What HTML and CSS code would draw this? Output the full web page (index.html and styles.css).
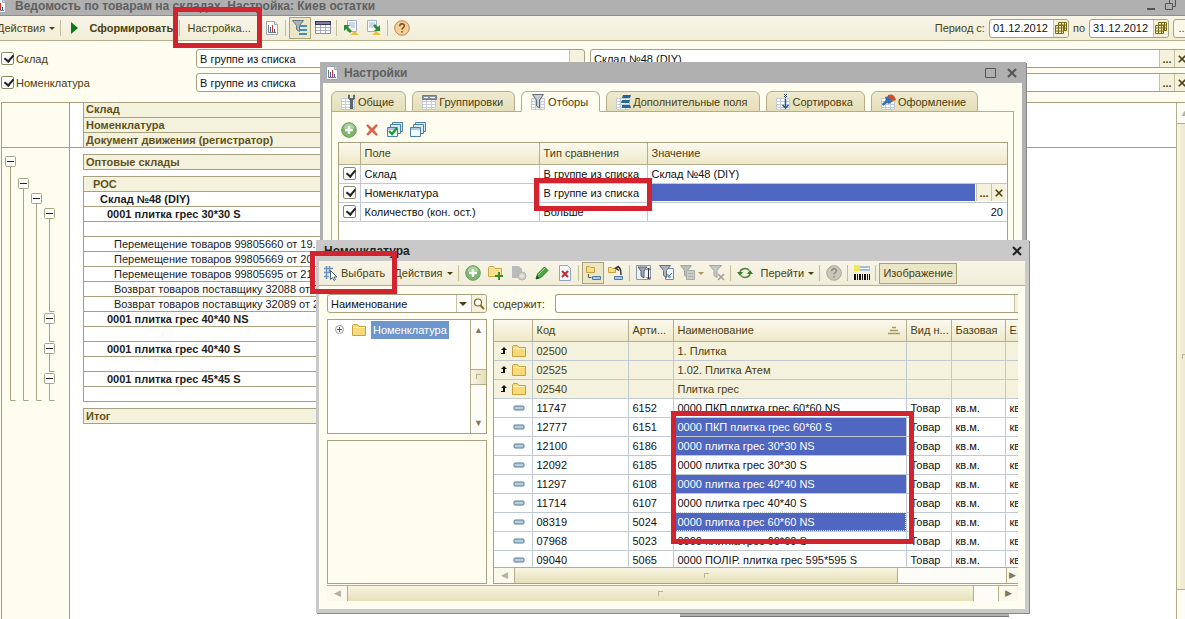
FILE: index.html
```html
<!DOCTYPE html>
<html lang="ru">
<head>
    <meta charset="UTF-8">
    <title>Ведомость по товарам на складах</title>
    <link rel="stylesheet" href="styles.css">
</head>
<body>
    <!-- icons -->
    <svg class="defs" width="0" height="0">
        <symbol id="i-report" viewBox="0 0 16 16">
            <path d="M2.500 1.500h8l3 3v10h-11z" fill="#fff" stroke="#9aa7b8"/>
            <path d="M10.500 1.500v3h3" fill="#dde4ee" stroke="#9aa7b8"/>
            <path d="M4.500 5v7.500h7.500" fill="none" stroke="#777"/>
            <path d="M6 7h1v5h-1zM10 9h1v3h-1z" fill="#3b57a8"/>
            <path d="M8 5h1v7h-1z" fill="#c33"/>
        </symbol>
        <symbol id="i-filter" viewBox="0 0 16 16">
            <path d="M0.500 0.500h11l-4 5v6l-3 -2v-4z" fill="#a9b4bd" stroke="#6b7680"/>
            <path d="M7 5h8v2h-8zM8 9h7v2h-7zM7 13h8v2h-8z" fill="#3f8fb8"/>
        </symbol>
        <symbol id="i-table" viewBox="0 0 16 16">
            <path d="M0.500 1.500h15v12h-15z" fill="#fff" stroke="#8b8da0"/>
            <path d="M0 1h16v4h-16z" fill="#34346a"/>
            <path d="M1 3h14" stroke="#c9c9e0"/>
            <path d="M1 7.500h14M1 10.500h14M5.500 5v8M10.500 5v8" stroke="#aaacc0"/>
        </symbol>
        <symbol id="i-load" viewBox="0 0 16 16">
            <path d="M4.500 0.500h9v11h-9z" fill="#fff" stroke="#9db0c8"/>
            <path d="M6 3h6M6 5h6M8 7h4" stroke="#9db0c8"/>
            <path d="M1 5v6l2 -2l4 4l2 -2l-4 -4l2 -2z" fill="#2c8a3c"/>
            <path d="M7 15l4.500 -4l4.500 4z" fill="#e8c23c"/>
        </symbol>
        <symbol id="i-save" viewBox="0 0 16 16">
            <path d="M1.500 0.500h9v11h-9z" fill="#fff" stroke="#9db0c8"/>
            <path d="M3 3h6M3 5h6M3 7h4" stroke="#9db0c8"/>
            <path d="M14 11v-6l-2 2l-3 -3l-2 2l3 3l-2 2z" fill="#2c8a3c"/>
            <path d="M6 15l4.500 -4l4.500 4z" fill="#e8c23c"/>
        </symbol>
        <symbol id="i-help" viewBox="0 0 16 16">
            <circle cx="8" cy="8" r="7.300" fill="#f7cf96" stroke="#b58a5a"/>
            <path d="M5.700 6.300q0 -2.500 2.300 -2.500t2.300 2.100q0 1.100 -1.200 1.900q-1.100 0.700 -1.100 1.800M8 11v1.500" fill="none" stroke="#7a4a1c" stroke-width="1.400"/>
        </symbol>
        <symbol id="i-help-off" viewBox="0 0 16 16">
            <circle cx="8" cy="8" r="7.300" fill="#c9c7ba" stroke="#aaa899"/>
            <path d="M5.700 6.300q0 -2.500 2.300 -2.500t2.300 2.100q0 1.100 -1.200 1.900q-1.100 0.700 -1.100 1.800M8 11v1.500" fill="none" stroke="#8f8d80" stroke-width="1.400"/>
        </symbol>
        <symbol id="i-calendar" viewBox="0 0 12 12">
            <path d="M3.500 0.500h8v8h-8z" fill="#f7f0c0" stroke="#7a6a10"/>
            <path d="M0.500 3.500h8v8h-8z" fill="#f7f0c0" stroke="#7a6a10"/>
            <path d="M1 6h10M1 9h8M3.500 1v10M6.500 1v10M9.500 1v8M4 3h7" stroke="#7a6a10"/>
        </symbol>
        <symbol id="i-add" viewBox="0 0 16 16">
            <circle cx="8" cy="8" r="7.300" fill="#7bb66c" stroke="#6a9a62"/>
            <path d="M2.500 6.500a5.500 5 0 0 1 11 0z" fill="#a9d29c"/>
            <path d="M8 4v8M4 8h8" stroke="#fff" stroke-width="2.400"/>
        </symbol>
        <symbol id="i-del" viewBox="0 0 16 16">
            <path d="M2.500 3.500q1 -1.500 2.500 0l3 3l3.500 -3.500q1 -1 2 0.500l-3.800 4.500l3.800 4.500q-1 1.500 -2 0.500l-3.500 -3.500l-3.500 3.500q-1 0.500 -1.800 -0.800l3.600 -4.200z" fill="#e2604c" stroke="#c2503c" stroke-width="0.600"/>
        </symbol>
        <symbol id="i-sheets" viewBox="0 0 16 16">
            <path d="M5.500 0.500h10v9h-10z" fill="#dbe9f5" stroke="#4a7fa8"/>
            <path d="M3.500 2.500h10v9h-10z" fill="#dbe9f5" stroke="#4a7fa8"/>
            <path d="M0.500 5.500h10v9h-10z" fill="#f2f8fd" stroke="#4a7fa8"/>
            <path d="M1 6h9v2h-9z" fill="#a9cbe4"/>
        </symbol>
        <symbol id="i-tick" viewBox="0 0 16 16">
            <path d="M2 9l3 3l5 -6" fill="none" stroke="#1f9a2c" stroke-width="2.400"/>
        </symbol>
        <symbol id="i-grid" viewBox="0 0 16 16">
            <path d="M0.500 4.500h13v11h-13z" fill="#fff" stroke="#c3cbd8"/>
            <path d="M1 7.500h12M1 10.500h12M1 13.500h12M4.500 5v10M9.500 5v10" stroke="#c3cbd8"/>
        </symbol>
        <symbol id="i-wrench" viewBox="0 0 16 16">
            <path d="M7 0.500v4l2 2v8.500h3v-8.500l2 -2v-4l-2 0.500v3h-3v-3z" fill="#5f6870"/>
        </symbol>
        <symbol id="i-head" viewBox="0 0 16 16">
            <path d="M0.500 1.500h14v4h-14z" fill="#8b95a6" stroke="#717c90"/>
            <path d="M2 3h4v1h-4zM8 3h5v1h-5z" fill="#fff"/>
        </symbol>
        <symbol id="i-funnel" viewBox="0 0 16 16">
            <path d="M1.500 0.500h11l-4 5.500v8l-3 -2v-6z" fill="#c5ced4" stroke="#626c74"/>
        </symbol>
        <symbol id="i-bars" viewBox="0 0 16 16">
            <path d="M7 1h8l-1 3h-8zM6 6h8l-1 3h-8zM6 11h8l1 3h-9z" fill="#22669c"/>
        </symbol>
        <symbol id="i-down" viewBox="0 0 16 16">
            <path d="M8 0h1v1h-1zM10 0h1v1h-1zM9 1h1v1h-1zM8 2h1v1h-1zM10 2h1v1h-1zM9 3h1v1h-1z" fill="#345"/>
            <path d="M9.500 5v9M6.500 11l3 3l3 -3" fill="none" stroke="#2a5a98" stroke-width="1.600"/>
        </symbol>
        <symbol id="i-brush" viewBox="0 0 16 16">
            <path d="M1 10l4 -4l-1 -3l4 -1l4 5l-4 3l-2 -1l-4 3z" fill="#3570b4"/>
            <path d="M7 1q6 -2 8 5l-3 1l-5 -4z" fill="#c8502e"/>
        </symbol>
        <symbol id="i-select" viewBox="0 0 16 16">
            <path d="M3.500 1v13M6.500 1v6M1 3.500h9M1 7.500h7M1 11.500h5" stroke="#6c95c2" stroke-width="1.600" fill="none"/>
            <path d="M7.500 5.500v9l2 -2l1.500 3l1.500 -1l-1.500 -2.500h3z" fill="#fff" stroke="#4a6078"/>
        </symbol>
        <symbol id="i-folder" viewBox="0 0 16 16">
            <path d="M1.500 13.500v-10l1 -1h4l1.500 2h6.500v9z" fill="#f6d978" stroke="#c9a040"/>
            <path d="M2 6h12v-1h-12z" fill="#fdf0bb"/>
        </symbol>
        <symbol id="i-folder-add" viewBox="0 0 16 16">
            <path d="M0.500 11.500v-9l1 -1h4l1.500 2h6.500v8z" fill="#f8e291" stroke="#cfa84a"/>
            <path d="M11 7v8M7 11h8" stroke="#3c8c2c" stroke-width="2"/>
        </symbol>
        <symbol id="i-copy-off" viewBox="0 0 16 16">
            <path d="M1 1h7l3 3v9h-10z" fill="#b9bcbb"/>
            <circle cx="11" cy="11" r="4" fill="#cfd0c8" stroke="#b3b4ab"/>
            <path d="M11 9v4M9 11h4" stroke="#f2f2ea"/>
        </symbol>
        <symbol id="i-pencil" viewBox="0 0 16 16">
            <path d="M2 14l1.500 -5l7 -7l3.500 3.500l-7 7z" fill="#4aa83c" stroke="#2f7a26"/>
            <path d="M4 10l7 -7" stroke="#9edc8c"/>
            <path d="M2 14l1 -3l2 2z" fill="#234"/>
        </symbol>
        <symbol id="i-mark-del" viewBox="0 0 16 16">
            <path d="M2.500 0.500h8l3 3v12h-11z" fill="#f5f8fc" stroke="#8fa5c4"/>
            <path d="M5 6l6 6M11 6l-6 6" stroke="#c0282c" stroke-width="2"/>
        </symbol>
        <symbol id="i-hier" viewBox="0 0 16 16">
            <path d="M1.500 7.500v-6h3l1 1h4v5z" fill="#f6df88" stroke="#c9a040"/>
            <path d="M3.500 9v3.500h3" fill="none" stroke="#555"/>
            <path d="M7.500 11.500h8v3h-8z" fill="#a9c8e4" stroke="#4f7aa6"/>
        </symbol>
        <symbol id="i-up-level" viewBox="0 0 16 16">
            <path d="M0.500 7.500v-5h3l1 1h3v4z" fill="#f6df88" stroke="#c9a040"/>
            <path d="M8 3q5 -3 5 7M11 1l-3.500 2l3.500 2.500" fill="none" stroke="#333" stroke-width="1.400"/>
            <path d="M6.500 11.500h8v3h-8z" fill="#a9c8e4" stroke="#4f7aa6"/>
        </symbol>
        <symbol id="i-filter-set" viewBox="0 0 16 16">
            <path d="M0.500 0.500h14v14h-14z" fill="#eef2f6" stroke="#8b99aa"/>
            <path d="M2 2h9l-3 4v7l-3 -2v-5z" fill="#9aa6b2" stroke="#5b6672"/>
            <path d="M12.500 3v11M10.500 5l2 -2l2 2M10.500 12l2 2l2 -2" fill="none" stroke="#333"/>
        </symbol>
        <symbol id="i-filter-cur" viewBox="0 0 16 16">
            <path d="M6.500 3.500h8v11h-8z" fill="#eef3fa" stroke="#6f8db5"/>
            <path d="M0.500 0.500h11l-4 5v7l-3 -2v-5z" fill="#aab5c0" stroke="#66727e"/>
            <path d="M9 12l4 -4M9 12v-3M9 12h3" stroke="#4a74b0" fill="none"/>
        </symbol>
        <symbol id="i-filter-hist" viewBox="0 0 16 16">
            <path d="M0.500 0.500h11l-4 5v7l-3 -2v-5z" fill="#bcbfbc" stroke="#a0a3a0"/>
            <path d="M6.500 5.500h8v9h-8z" fill="#c9cbc6" stroke="#a9aba6"/>
            <path d="M8 8.500h5M8 11.500h5" stroke="#a9aba6"/>
        </symbol>
        <symbol id="i-filter-off" viewBox="0 0 16 16">
            <path d="M0.500 0.500h12l-4.500 5v7l-3 -2v-5z" fill="#c6c8c2" stroke="#a4a6a0"/>
            <path d="M9 9l6 6M15 9l-6 6" stroke="#a4a098" stroke-width="1.600"/>
        </symbol>
        <symbol id="i-refresh" viewBox="0 0 16 16">
            <path d="M3 8q0 -4 5 -4.500q3 0 4 2M13 8q0 4 -5 4.500q-3 0 -4 -2" fill="none" stroke="#4c8a3c" stroke-width="1.600"/>
            <path d="M0 7h6l-3 4zM16 9h-6l3 -4z" fill="#3c7a2c"/>
        </symbol>
        <symbol id="i-barcode" viewBox="0 0 16 16">
            <path d="M5 1h11v5h-11z" fill="#a9bcdc"/>
            <path d="M6 3.500h9" stroke="#fff"/>
            <path d="M0 0h6v6h-6z" fill="#f7e94a"/>
            <path d="M0 9h2v6h-2zM3 9h1v6h-1zM5 9h2v6h-2zM8 9h1v6h-1zM10 9h2v6h-2zM13 9h1v6h-1zM15 9h1v6h-1z" fill="#111"/>
        </symbol>
        <symbol id="i-search" viewBox="0 0 12 12">
            <circle cx="5" cy="4.500" r="3.500" fill="#fff" stroke="#7a6a20" stroke-width="1.200"/>
            <path d="M7.500 7.500l3.500 3.500" stroke="#7a6a20" stroke-width="1.800"/>
        </symbol>
        <symbol id="i-cross" viewBox="0 0 10 10">
            <path d="M1 1l8 8M9 1l-8 8" stroke="currentColor" stroke-width="2"/>
        </symbol>
        <symbol id="i-up" viewBox="0 0 8 10">
            <path d="M4 1l3 3h-2v4h-4v-1h2v-3h-2z" fill="#111"/>
        </symbol>
        <symbol id="i-item" viewBox="0 0 12 6">
            <rect x="1" y="1" width="10" height="4" rx="1" fill="#b4cfe0" stroke="#557a94"/>
        </symbol>
        <symbol id="i-sort" viewBox="0 0 12 10">
            <path d="M4 1.500h4M2 4.500h8M0 7.500h12" stroke="#a39a62" stroke-width="1.400"/>
        </symbol>
    </svg>

    <div class="app">
        <header class="title">
            <svg class="ico"><use href="#i-report"/></svg>
            <h1>Ведомость по товарам на складах. Настройка: Киев остатки</h1>
            <svg class="winctl" width="30" height="14" viewBox="0 0 30 14">
                <path d="M1 10h8" stroke="#555" stroke-width="2"/>
                <path d="M23.500 4v-3.500h6v7h-3M19.500 4.500h7v6h-7z" fill="none" stroke="#555"/>
            </svg>
        </header>

        <div class="toolbar main-tools">
            <button class="drop">Действия</button>
            <i class="sep"></i>
            <button class="run">Сформировать</button>
            <i class="sep wide"></i>
            <button class="setup">Настройка...<span class="mark"></span></button>
            <button class="tool"><svg class="ico"><use href="#i-report"/></svg></button>
            <i class="sep"></i>
            <button class="tool on"><svg class="ico"><use href="#i-filter"/></svg></button>
            <button class="tool"><svg class="ico"><use href="#i-table"/></svg></button>
            <i class="sep"></i>
            <button class="tool"><svg class="ico"><use href="#i-load"/></svg></button>
            <button class="tool"><svg class="ico"><use href="#i-save"/></svg></button>
            <i class="sep"></i>
            <button class="tool"><svg class="ico"><use href="#i-help"/></svg></button>
            <div class="period">
                <label for="from">Период с:</label>
                <span class="field date"><input id="from" type="text" value="01.12.2012"><button><svg class="small"><use href="#i-calendar"/></svg></button></span>
                <label for="to">по</label>
                <span class="field date"><input id="to" type="text" value="31.12.2012"><button><svg class="small"><use href="#i-calendar"/></svg></button></span>
                <button class="more">...</button>
            </div>
        </div>

        <div class="filters">
            <div class="filter">
                <label><input type="checkbox" checked>Склад</label>
                <span class="field kind"><select aria-label="Тип сравнения"><option>В группе из списка</option></select></span>
                <span class="field value"><input type="text" value="Склад №48 (DIY)" aria-label="Склад"><button>...</button><button><svg class="x"><use href="#i-cross"/></svg></button></span>
            </div>
            <div class="filter">
                <label><input type="checkbox" checked>Номенклатура</label>
                <span class="field kind"><select aria-label="Тип сравнения"><option>В группе из списка</option></select></span>
                <span class="field value"><input type="text" aria-label="Номенклатура"><button>...</button><button><svg class="x"><use href="#i-cross"/></svg></button></span>
            </div>
        </div>

        <div class="report">
            <div class="gutter">
                <svg width="68" height="300" viewBox="0 0 68 300">
                    <g fill="none" stroke="#a9a283">
                        <path d="M8.500 20v233.500h5M21.500 42v211.500h5M34.500 57v196.500h5M47.500 72v92.500h5M47.500 177v17.500h5M47.500 207v17.500h5M47.500 237v16.500h5"/>
                        <g fill="#fff">
                            <rect x="3.500" y="9.500" width="10" height="10" rx="1"/>
                            <rect x="16.500" y="31.500" width="10" height="10" rx="1"/>
                            <rect x="29.500" y="46.500" width="10" height="10" rx="1"/>
                            <rect x="42.500" y="61.500" width="10" height="10" rx="1"/>
                            <rect x="42.500" y="166.500" width="10" height="10" rx="1"/>
                            <rect x="42.500" y="196.500" width="10" height="10" rx="1"/>
                            <rect x="42.500" y="226.500" width="10" height="10" rx="1"/>
                        </g>
                    </g>
                    <path d="M5 14.500h7M18 36.500h7M31 51.500h7M44 66.500h7M44 171.500h7M44 201.500h7M44 231.500h7" stroke="#222"/>
                </svg>
            </div>
            <div class="sheet">
                <table class="cells head">
                    <tr><th>Склад</th></tr>
                    <tr><th>Номенклатура</th></tr>
                    <tr><th>Документ движения (регистратор)</th></tr>
                </table>
                <table class="cells">
                    <tr><th>Оптовые склады</th></tr>
                </table>
                <table class="cells">
                    <tr><th class="l1">РОС</th></tr>
                    <tr><td class="l2 b">Склад №48 (DIY)</td></tr>
                    <tr><td class="l3 b">0001 плитка грес 30*30 S</td></tr>
                    <tr><td></td></tr>
                    <tr><td class="l4">Перемещение товаров 99805660 от 19.12.2012</td></tr>
                    <tr><td class="l4">Перемещение товаров 99805669 от 20.12.2012</td></tr>
                    <tr><td class="l4">Перемещение товаров 99805695 от 21.12.2012</td></tr>
                    <tr><td class="l4">Возврат товаров поставщику 32088 от 21.12.2012</td></tr>
                    <tr><td class="l4">Возврат товаров поставщику 32089 от 21.12.2012</td></tr>
                    <tr><td class="l3 b">0001 плитка грес 40*40 NS</td></tr>
                    <tr><td></td></tr>
                    <tr><td class="l3 b">0001 плитка грес 40*40 S</td></tr>
                    <tr><td></td></tr>
                    <tr><td class="l3 b">0001 плитка грес 45*45 S</td></tr>
                    <tr><td></td></tr>
                </table>
                <table class="cells">
                    <tr><th>Итог</th></tr>
                </table>
            </div>
            <div class="vscroll"><button>▲</button><i class="thumb"></i><i class="rest"></i></div>
        </div>
    </div>

    <i class="ledge"></i>

    <!-- report settings -->
    <section class="win settings">
        <header class="title">
            <svg class="ico"><use href="#i-report"/></svg>
            <h2>Настройки</h2>
            <svg class="winctl" width="34" height="12" viewBox="0 0 34 12">
                <path d="M1.500 1.500h10v9h-10z" fill="none" stroke="#555"/>
                <path d="M24 2l8 8M32 2l-8 8" stroke="#555" stroke-width="2"/>
            </svg>
        </header>
        <nav class="tabs">
            <button><svg class="ico"><use href="#i-grid"/><use href="#i-wrench"/></svg>Общие</button>
            <button><svg class="ico"><use href="#i-grid"/><use href="#i-head"/></svg>Группировки</button>
            <button class="current"><svg class="ico"><use href="#i-grid"/><use href="#i-funnel"/></svg>Отборы</button>
            <button><svg class="ico"><use href="#i-grid"/><use href="#i-bars"/></svg>Дополнительные поля</button>
            <button><svg class="ico"><use href="#i-grid"/><use href="#i-down"/></svg>Сортировка</button>
            <button><svg class="ico"><use href="#i-grid"/><use href="#i-brush"/></svg>Оформление</button>
        </nav>
        <div class="page">
            <div class="page-tools">
                <button class="tool"><svg class="ico"><use href="#i-add"/></svg></button>
                <button class="tool"><svg class="ico"><use href="#i-del"/></svg></button>
                <button class="tool"><svg class="ico"><use href="#i-sheets"/><use href="#i-tick"/></svg></button>
                <button class="tool"><svg class="ico"><use href="#i-sheets"/></svg></button>
            </div>
            <div class="grid-box">
                <table class="grid">
                    <colgroup><col class="c-check"><col class="c-field"><col class="c-type"><col></colgroup>
                    <tr><th></th><th>Поле</th><th>Тип сравнения</th><th>Значение</th></tr>
                    <tr>
                        <td><input type="checkbox" checked aria-label="Склад"></td>
                        <td>Склад</td><td>В группе из списка</td><td>Склад №48 (DIY)</td>
                    </tr>
                    <tr>
                        <td><input type="checkbox" checked aria-label="Номенклатура"></td>
                        <td>Номенклатура</td><td class="marked">В группе из списка<span class="mark"></span></td>
                        <td class="edit"><div><i></i><button>...</button><button><svg class="x"><use href="#i-cross"/></svg></button></div></td>
                    </tr>
                    <tr>
                        <td><input type="checkbox" checked aria-label="Количество"></td>
                        <td>Количество (кон. ост.)</td><td>Больше</td><td class="num">20</td>
                    </tr>
                </table>
            </div>
        </div>
    </section>

    <!-- goods picker -->
    <section class="win picker">
        <header class="title">
            <h2>Номенклатура</h2>
            <svg class="winctl" width="12" height="12" viewBox="0 0 12 12">
                <path d="M2 2l8 8M10 2l-8 8" stroke="#222" stroke-width="2"/>
            </svg>
        </header>
        <div class="toolbar">
            <button class="choose"><svg class="ico"><use href="#i-select"/></svg>Выбрать<span class="mark"></span></button>
            <button class="drop">Действия</button>
            <i class="sep"></i>
            <button class="tool"><svg class="ico"><use href="#i-add"/></svg></button>
            <button class="tool"><svg class="ico"><use href="#i-folder-add"/></svg></button>
            <button class="tool"><svg class="ico"><use href="#i-copy-off"/></svg></button>
            <button class="tool"><svg class="ico"><use href="#i-pencil"/></svg></button>
            <button class="tool"><svg class="ico"><use href="#i-mark-del"/></svg></button>
            <i class="sep"></i>
            <button class="tool on"><svg class="ico"><use href="#i-hier"/></svg></button>
            <button class="tool"><svg class="ico"><use href="#i-up-level"/></svg></button>
            <i class="sep"></i>
            <button class="tool"><svg class="ico"><use href="#i-filter-set"/></svg></button>
            <button class="tool"><svg class="ico"><use href="#i-filter-cur"/></svg></button>
            <button class="tool drop"><svg class="ico"><use href="#i-filter-hist"/></svg></button>
            <button class="tool"><svg class="ico"><use href="#i-filter-off"/></svg></button>
            <i class="sep"></i>
            <button class="tool"><svg class="ico"><use href="#i-refresh"/></svg></button>
            <button class="drop">Перейти</button>
            <i class="sep"></i>
            <button class="tool"><svg class="ico"><use href="#i-help-off"/></svg></button>
            <i class="sep"></i>
            <button class="tool"><svg class="ico"><use href="#i-barcode"/></svg></button>
            <i class="sep"></i>
            <button class="image on">Изображение</button>
        </div>
        <div class="picker-body">
            <div class="side">
                <span class="field combo"><select aria-label="Поле поиска"><option>Наименование</option></select><button><svg class="small"><use href="#i-search"/></svg></button></span>
                <div class="tree">
                    <ul>
                        <li><svg class="plus" width="9" height="9" viewBox="0 0 9 9"><circle cx="4.500" cy="4.500" r="4" fill="#fff" stroke="#999"/><path d="M2 4.500h5M4.500 2v5" stroke="#555"/></svg><svg class="ico"><use href="#i-folder"/></svg><b>Номенклатура</b></li>
                    </ul>
                    <div class="vscroll"><button>▲</button><i class="rest"></i><i class="thumb"></i><i class="rest"></i><button>▼</button></div>
                </div>
                <div class="preview"></div>
            </div>
            <div class="list">
                <div class="search">
                    <label for="q">содержит:</label>
                    <span class="field"><input id="q" type="text"><button></button></span>
                </div>
                <div class="grid-box">
                    <div class="rows">
                        <table class="grid goods">
                            <colgroup><col class="g-icon"><col class="g-code"><col class="g-art"><col><col class="g-kind"><col class="g-base"><col class="g-unit"></colgroup>
                            <tr><th></th><th>Код</th><th>Арти...</th><th>Наименование<svg class="sort"><use href="#i-sort"/></svg></th><th>Вид н...</th><th>Базовая</th><th>Е,</th></tr>
                            <tr class="group"><td><svg class="up"><use href="#i-up"/></svg><svg class="ico"><use href="#i-folder"/></svg></td><td>02500</td><td></td><td>1. Плитка</td><td></td><td></td><td></td></tr>
                            <tr class="group"><td><svg class="up"><use href="#i-up"/></svg><svg class="ico"><use href="#i-folder"/></svg></td><td>02525</td><td></td><td>1.02. Плитка Атем</td><td></td><td></td><td></td></tr>
                            <tr class="group"><td><svg class="up"><use href="#i-up"/></svg><svg class="ico"><use href="#i-folder"/></svg></td><td>02540</td><td></td><td>Плитка грес</td><td></td><td></td><td></td></tr>
                            <tr><td><svg class="item"><use href="#i-item"/></svg></td><td>11747</td><td>6152</td><td>0000 ПКП плитка грес 60*60 NS</td><td>Товар</td><td>кв.м.</td><td>кв</td></tr>
                            <tr><td><svg class="item"><use href="#i-item"/></svg></td><td>12777</td><td>6151</td><td class="sel marked">0000 ПКП плитка грес 60*60 S<span class="mark"></span></td><td>Товар</td><td>кв.м.</td><td>кв</td></tr>
                            <tr><td><svg class="item"><use href="#i-item"/></svg></td><td>12100</td><td>6186</td><td class="sel">0000 плитка грес 30*30 NS</td><td>Товар</td><td>кв.м.</td><td>кв</td></tr>
                            <tr><td><svg class="item"><use href="#i-item"/></svg></td><td>12092</td><td>6185</td><td>0000 плитка грес 30*30 S</td><td>Товар</td><td>кв.м.</td><td>кв</td></tr>
                            <tr><td><svg class="item"><use href="#i-item"/></svg></td><td>11297</td><td>6108</td><td class="sel">0000 плитка грес 40*40 NS</td><td>Товар</td><td>кв.м.</td><td>кв</td></tr>
                            <tr><td><svg class="item"><use href="#i-item"/></svg></td><td>11714</td><td>6107</td><td>0000 плитка грес 40*40 S</td><td>Товар</td><td>кв.м.</td><td>кв</td></tr>
                            <tr><td><svg class="item"><use href="#i-item"/></svg></td><td>08319</td><td>5024</td><td class="sel focus">0000 плитка грес 60*60 NS</td><td>Товар</td><td>кв.м.</td><td>кв</td></tr>
                            <tr><td><svg class="item"><use href="#i-item"/></svg></td><td>07968</td><td>5023</td><td>0000 плитка грес 60*60 S</td><td>Товар</td><td>кв.м.</td><td>кв</td></tr>
                            <tr><td><svg class="item"><use href="#i-item"/></svg></td><td>09040</td><td>5065</td><td>0000 ПОЛІР. плитка грес 595*595 S</td><td>Товар</td><td>кв.м.</td><td>кв</td></tr>
                        </table>
                    </div>
                    <div class="hscroll inner"><button>◀</button><i class="thumb"></i><i class="rest"></i><button class="live">▶</button></div>
                </div>
            </div>
        </div>
        <div class="hscroll outer"><button>◀</button><i class="thumb"></i><i class="rest"></i><button class="live">▶</button></div>
    </section>
</body>
</html>
```
FILE: styles.css
```css
*{
    margin: 0;
    padding: 0;
    box-sizing: border-box;
}
html,body{
    height: 100%;
}
body{
    position: relative;
    overflow: hidden;
    background: #fffcf0;
    color: #1c1c1c;
    font: 11px/14px "Liberation Sans", Arial, sans-serif;
}
button,input,select{
    font: inherit;
    color: inherit;
    border: 0;
    background: none;
    border-radius: 0;
    appearance: none;
}
button{
    color: #4a4010;
    white-space: nowrap;
}
ul{
    list-style: none;
}
svg{
    display: block;
    flex: none;
}
table{
    border-collapse: collapse;
    width: 100%;
}
.defs{
    position: absolute;
}
.ico{
    width: 16px;
    height: 16px;
}
.small{
    width: 12px;
    height: 12px;
}
.x{
    width: 8px;
    height: 8px;
}

/* red frames */
.mark{
    position: absolute;
    z-index: 5;
    border: 5px solid #d2232e;
    pointer-events: none;
}
.marked,.setup,.choose{
    position: relative;
}
.setup .mark{
    inset: -10px -11px -9px -14px;
}
.choose .mark{
    inset: -11px -12px -10px -13px;
}
.marked .mark{
    inset: -6px -5px -9px -6px;
}
.goods .marked .mark{
    inset: -7px -8px auto -3px;
    height: 133px;
}

/* main window */
.app{
    height: 100%;
    display: flex;
    flex-direction: column;
    margin-right: -8px;
}
.title{
    display: flex;
    align-items: center;
    background: #b0b0b0;
    color: #606060;
}
.title h1,.title h2{
    font-size: 12px;
    line-height: 14px;
    white-space: nowrap;
}
.title .winctl{
    margin-left: auto;
}
.app>.title{
    height: 16px;
    padding: 0 17px 3px 0;
    border-bottom: 1px solid #8c8c8c;
}
.app>.title .ico{
    margin: 0 7px 0 -8px;
}
.toolbar{
    display: flex;
    align-items: center;
    gap: 1px;
    height: 25px;
    background: linear-gradient(#f8f5e8,#f1edd8);
    border-bottom: 1px solid #b5ae8c;
}
.tool{
    display: flex;
    align-items: center;
    justify-content: center;
    width: 22px;
    height: 22px;
    flex: none;
}
.on{
    background: #ece6c8;
    border: 1px solid #aaa27a;
}
.sep{
    width: 1px;
    height: 16px;
    margin: 0 2px 0 1px;
    background: #c4bd98;
}
.drop::after{
    content: "";
    display: inline-block;
    margin-left: 4px;
    vertical-align: 2px;
    border: 3px solid transparent;
    border-top-color: #4a4010;
    border-bottom: 0;
}
.tool.drop{
    width: 26px;
}
.tool.drop::after{
    margin-left: 2px;
    border-top-color: #a89a60;
}
.main-tools>.drop{
    margin: 0 3px 0 -3px;
}
.run{
    width: 106px;
    font-weight: bold;
    text-align: right;
    margin-left: 3px;
}
.run::before{
    content: "";
    float: left;
    margin: 1px 0 0 4px;
    border: 6px solid transparent;
    border-left: 7px solid #0a7a1c;
    border-right: 0;
}
.wide{
    margin: 0 6px 0 5px;
}
.setup{
    width: 64px;
    height: 22px;
    margin-right: 9px;
}
.period{
    display: flex;
    align-items: center;
    gap: 4px;
    margin-left: auto;
    color: #4a4010;
}
.field{
    display: flex;
    align-items: center;
    height: 19px;
    background: #fff;
    border: 1px solid #a8a180;
    border-radius: 3px;
    overflow: hidden;
}
.field input,.field select{
    flex: 1;
    min-width: 0;
    height: 17px;
    padding: 0 3px;
    color: #111;
}
.field button,.edit button{
    display: flex;
    align-items: center;
    justify-content: center;
    width: 15px;
    height: 17px;
    background: #f5f1dc;
    border-left: 1px solid #c9c29e;
    font-weight: bold;
}
.date{
    width: 80px;
}
.more{
    width: 20px;
    height: 19px;
    border: 1px solid #a8a180;
    border-radius: 3px;
    background: #fbf8e8;
}
.filters{
    display: flex;
    flex-direction: column;
    gap: 5px;
    padding: 8px 3px 10px 1px;
}
.filter{
    display: grid;
    grid-template-columns: 195px 389px 1fr;
    align-items: center;
    color: #4a4010;
}
.filter label{
    display: flex;
    align-items: center;
    gap: 2px;
}
.kind{
    background: linear-gradient(90deg,#c9c29e 1px,#f5f1dc 1px) right/15px 100% no-repeat #fff;
}
.value{
    margin-left: 5px;
}
input[type=checkbox]{
    display: block;
    width: 13px;
    height: 13px;
    border: 1px solid #8d8768;
    border-radius: 2px;
    background: #fff;
}
input[type=checkbox]:checked::after{
    content: "";
    display: block;
    width: 4px;
    height: 7px;
    margin: 0 0 0 4px;
    border: solid #222;
    border-width: 0 2px 2px 0;
    transform: rotate(40deg);
}
.report{
    flex: 1;
    display: flex;
    min-height: 0;
    margin-left: 1px;
    border: 1px solid #a8a180;
    border-bottom: 0;
    background: #fff;
}
.gutter{
    width: 68px;
    overflow: hidden;
    padding-top: 44px;
    background: linear-gradient(#a8a180,#a8a180) 0 44px/100% 1px no-repeat #fffcf0;
    border-right: 1px solid #a8a180;
}
.sheet{
    flex: 1;
    padding-left: 13px;
    background: linear-gradient(#a8a180,#a8a180) 0 44px/100% 1px no-repeat;
}
.cells{
    width: 60%;
    margin-bottom: 6px;
    line-height: 14px;
}
.cells th,.cells td{
    height: 15px;
    padding: 0 2px;
    border: 1px solid #a8a180;
    text-align: left;
    white-space: nowrap;
}
.cells th{
    background: #f4f1dd;
    color: #62511a;
}
.cells.head tr:first-child th{
    height: 14px;
    line-height: 13px;
    border-top: 0;
}
.b{
    font-weight: bold;
}
.cells .l1{
    padding-left: 9px;
}
.cells .l2{
    padding-left: 16px;
}
.cells .l3{
    padding-left: 23px;
}
.cells .l4{
    padding-left: 30px;
}
.vscroll{
    display: flex;
    flex-direction: column;
    width: 16px;
    border-left: 1px solid #b5ae8c;
    background: #fdfcf6;
}
.vscroll button,.hscroll button{
    flex: none;
    color: #b4b1a2;
    font-size: 9px;
    line-height: 9px;
}
.vscroll button{
    height: 20px;
}
.thumb{
    display: flex;
    align-items: center;
    justify-content: center;
}
.thumb::after{
    content: "";
    width: 4px;
    height: 4px;
    border: solid #bdb68e;
    border-width: 1px 0 0 1px;
}
.vscroll .thumb{
    flex: 1;
    border: solid #b5ae8c;
    border-width: 1px 0;
    background: linear-gradient(90deg,#f8f5e2,#e6dfb8);
}
.report>.vscroll .rest{
    height: 29px;
}

/* floating windows */
.win{
    position: absolute;
    background: #fffcf0;
    border: solid #b0b0b0;
    border-width: 0 4px 4px 3px;
    box-shadow: 1px 1px 0 #888;
}
.settings{
    top: 62px;
    left: 320px;
    right: 159px;
    height: 300px;
}
.settings .title{
    height: 21px;
    padding: 0 4px 0 1px;
}
.settings .title .ico{
    margin-right: 4px;
}
.tabs{
    display: flex;
    gap: 6px;
    padding: 8px 0 0 8px;
    margin-bottom: -1px;
}
.tabs button{
    position: relative;
    display: flex;
    align-items: center;
    height: 21px;
    padding: 0 11px 0 9px;
    gap: 1px;
    background: linear-gradient(#efead0,#e4deb8);
    border: 1px solid #b5ae8c;
    border-radius: 6px 6px 0 0;
}
.tabs .current{
    background: #fffcf0;
    border-bottom-color: #fffcf0;
}
.page{
    height: 200px;
    margin: 0 8px;
    padding: 7px 5px 0 6px;
    border: 1px solid #b5ae8c;
}
.page-tools{
    display: flex;
    gap: 1px;
    margin-bottom: 1px;
}
.grid-box{
    background: #fff;
    border: 1px solid #a8a180;
    overflow: hidden;
}
.page .grid-box{
    height: 150px;
}
.grid{
    table-layout: fixed;
}
.grid th,.grid td{
    height: 19px;
    padding: 0 4px;
    border-right: 1px solid #c0c8d0;
    border-bottom: 1px solid #c0c8d0;
    text-align: left;
    white-space: nowrap;
    color: #111;
}
.grid th{
    height: 21px;
    background: linear-gradient(#fbf9ee,#efe8c8);
    border-color: #b5ae8c;
    color: #4a4010;
    font-weight: normal;
}
.grid th:last-child,.grid td:last-child{
    border-right: 0;
}
.c-check{
    width: 21px;
}
.c-field{
    width: 179px;
}
.c-type{
    width: 108px;
}
.grid .edit{
    padding: 0 1px 0 4px;
}
.edit div{
    display: flex;
}
.edit i{
    flex: 1;
    margin-right: 1px;
    background: #4f67c0;
}
.grid .num{
    text-align: right;
}

.picker{
    top: 240px;
    left: 316px;
    right: 156px;
    border-color: #c9c9c9;
}
.picker .title{
    height: 21px;
    padding: 0 2px 0 5px;
    background: #c9c9c9;
    color: #222;
}
.picker .toolbar>.drop:not(.tool){
    margin: 0 3px 0 8px;
}
.picker .toolbar .tool + .drop:not(.tool){
    margin-left: 4px;
}
.choose{
    display: flex;
    align-items: center;
    gap: 2px;
    height: 22px;
    margin-left: 4px;
}
.image{
    width: 78px;
    height: 21px;
}
.picker-body{
    display: grid;
    grid-template-columns: 160px 1fr;
    gap: 6px;
    padding: 8px 7px 0 8px;
}
.side,.list{
    display: flex;
    flex-direction: column;
    gap: 6px;
    min-width: 0;
}
.combo select{
    background: linear-gradient(#c9c29e,#c9c29e) right 14px top 0/1px 100% no-repeat;
}
.combo{
    position: relative;
}
.combo::after{
    content: "";
    position: absolute;
    right: 19px;
    top: 7px;
    border: 4px solid transparent;
    border-top-color: #4a4010;
    border-bottom: 0;
}
.tree{
    display: flex;
    height: 115px;
    background: #fff;
    border: 1px solid #a8a180;
}
.tree ul{
    flex: 1;
}
.tree li{
    display: flex;
    align-items: center;
    height: 19px;
}
.plus{
    margin: 0 7px;
}
.tree b{
    margin-left: 4px;
    padding: 2px;
    background: #6c96cc;
    color: #fff;
    font-weight: normal;
}
.tree .thumb{
    flex: none;
    height: 16px;
}
.tree .rest{
    flex: 1;
}
.tree button{
    color: #7d7964;
}
.preview{
    flex: 1;
    border: 1px solid #a8a180;
}
.search{
    display: flex;
    align-items: center;
    color: #4a4010;
}
.search label{
    width: 62px;
}
.search .field{
    flex: 1;
    border-right: 0;
    border-radius: 3px 0 0 3px;
}
.search .field button{
    width: 4px;
}
.list .grid-box{
    border-right: 0;
}
.rows{
    height: 247px;
    overflow: hidden;
}
.goods .ico{
    display: inline-block;
    vertical-align: middle;
}
.goods .group td{
    background: #f4f1dd;
    color: #4a4010;
}
.goods td:last-child,.goods th:last-child{
    overflow: hidden;
}
.up{
    display: inline-block;
    width: 8px;
    height: 10px;
    margin: 0 3px 0 2px;
    vertical-align: middle;
}
.item{
    width: 12px;
    height: 6px;
    margin-left: 15px;
}
.sort{
    float: right;
    width: 12px;
    height: 10px;
    margin: 3px 2px 0 0;
}
.goods .sel{
    background: #4f67c0;
    color: #fff;
}
.focus{
    outline: 1px dotted #fff;
    outline-offset: -1px;
}
.g-icon{
    width: 38px;
}
.g-code{
    width: 96px;
}
.g-art{
    width: 45px;
}
.g-kind{
    width: 45px;
}
.g-base{
    width: 54px;
}
.g-unit{
    width: 13px;
}
.hscroll{
    display: flex;
    height: 16px;
    background: #fdfcf6;
    border-top: 1px solid #b5ae8c;
}
.hscroll button{
    width: 20px;
    background: #fbf9ec;
}
.hscroll .live{
    color: #7d7964;
    border-left: 1px solid #b5ae8c;
}
.hscroll .thumb{
    flex: 1;
    border: solid #b5ae8c;
    border-width: 0 1px;
    background: linear-gradient(#f8f5e2,#e6dfb8);
}
.inner .rest{
    width: 108px;
}
.inner .live{
    width: 12px;
}
.outer{
    margin: 1px 7px 8px 8px;
}
.outer .rest{
    width: 24px;
}
.ledge{
    position: absolute;
    top: 614px;
    left: 680px;
    right: 176px;
    height: 3px;
    background: #b0b0b0;
    border-bottom: 1px solid #777;
}
```
